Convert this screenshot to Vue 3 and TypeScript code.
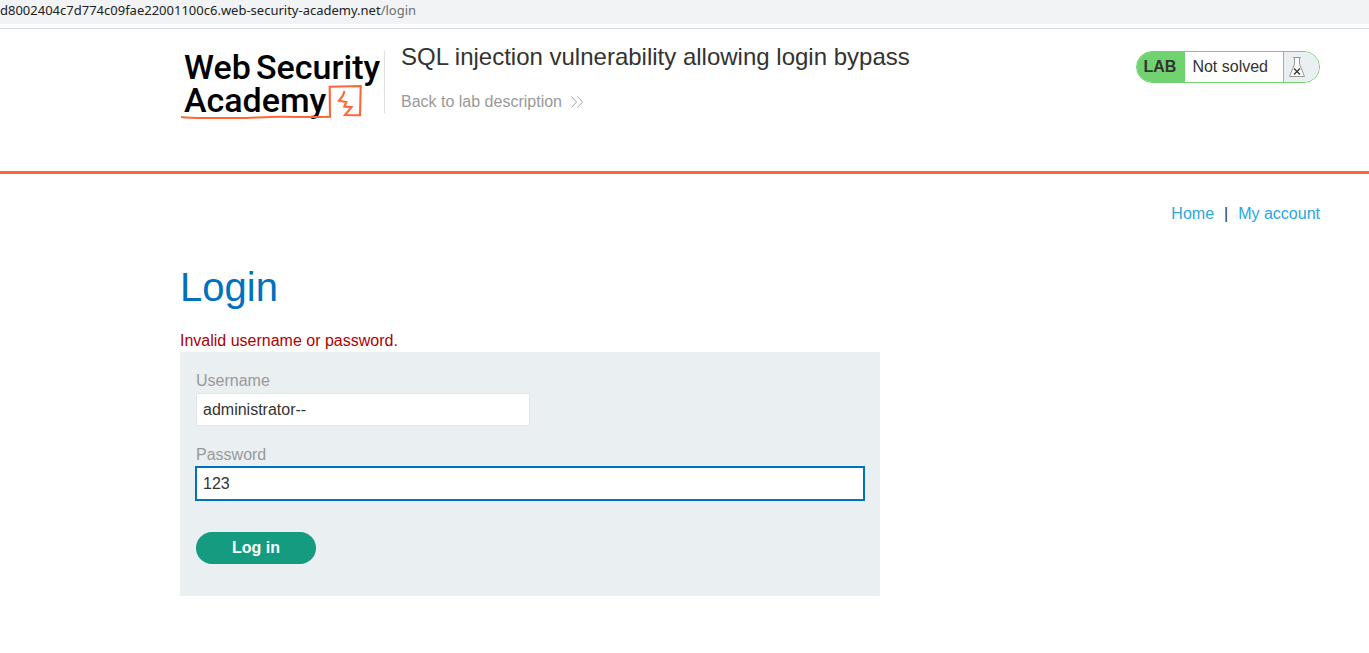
<script setup lang="ts">
import { ref } from 'vue'

const username = ref('administrator--')
const password = ref('123')
</script>

<template>
  <div class="page">
    <div class="address-bar">
      <div class="address">d8002404c7d774c09fae22001100c6.web-security-academy.net<span class="path">/login</span></div>
    </div>

    <header class="lab-header">
      <a class="logo" href="#" aria-label="Web Security Academy">
        <svg width="204" height="76" viewBox="0 0 204 76">
          <g class="wordmark">
            <text x="4" y="32">Web</text>
            <text x="76" y="32">Security</text>
            <text x="4" y="65">Academy</text>
          </g>
          <g fill="none" stroke="#ff6633">
            <path d="M150 70L149.700 39.700L180.700 39L180 68.200L165 68L171.500 60.200L164.300 59.500L166.300 55L159 53.700L163 48.500L164.500 44" stroke-width="2.100" />
            <path d="M1 70C18 72 34 70.500 50 71S74 70.500 90 70S132 70.500 151 69.800" stroke-width="2" />
          </g>
        </svg>
      </a>
      <div class="title-block">
        <h2>SQL injection vulnerability allowing login bypass</h2>
        <a class="back" href="#">
          Back to lab description
          <svg width="14" height="12" viewBox="0 0 14 12" fill="none" stroke="#a3a3a3" aria-hidden="true">
            <path d="M1.500 0.500L6.500 6L1.500 11.500M7.500 0.500L12.500 6L7.500 11.500" />
          </svg>
        </a>
      </div>
      <div class="status">
        <span class="lab">LAB</span>
        <span class="state">Not solved</span>
        <span class="flask">
          <svg width="18" height="22" viewBox="0 0 18 22" fill="none" aria-hidden="true">
            <path d="M6.500 1.500V8L1.500 20.500H16.500L11.500 8V1.500Z" fill="#fff" stroke="#999" />
            <path d="M5 1.500H13" stroke="#999" />
            <path d="M6 12.500L12 18.500M12 12.500L6 18.500" stroke="#333" stroke-width="1.300" />
          </svg>
        </span>
      </div>
    </header>

    <main>
      <nav>
        <a href="#">Home</a>
        <span>|</span>
        <a href="#">My account</a>
      </nav>
      <h1>Login</h1>
      <p class="warning">Invalid username or password.</p>
      <form @submit.prevent>
        <label for="username">Username</label>
        <input id="username" v-model="username" class="short" type="text" />
        <label for="password">Password</label>
        <input id="password" v-model="password" class="active" type="text" />
        <button type="submit">Log in</button>
      </form>
    </main>
  </div>
</template>

<style>
body {
  margin: 0;
  background: #fff;
}
</style>

<style scoped>
.page {
  color: #333332;
  font: 16px/20px "Liberation Sans", Arial, sans-serif;
}
a {
  text-decoration: none;
}
.address-bar {
  padding-bottom: 4px;
  border-bottom: 1px solid #d9dadc;
}
.address {
  height: 24px;
  background: #f1f3f4;
  color: #202124;
  font: 13px/21px "Noto Sans", "Open Sans", sans-serif;
  white-space: nowrap;
}
.path {
  color: #6b6e72;
}
.lab-header {
  display: flex;
  align-items: flex-start;
  box-sizing: border-box;
  min-height: 145px;
  padding: 18px 49px 0 180px;
  border-bottom: 3px solid #ff6633;
}
.logo {
  display: flex;
}
.wordmark {
  fill: #000;
  font: 500 34px Roboto, sans-serif;
}
.title-block {
  flex: 1;
  margin-top: 4px;
  padding-left: 16px;
  min-height: 62px;
  border-left: 1px solid #e0e0e0;
}
.title-block h2 {
  margin: -8px 0 0;
  font-size: 24px;
  font-weight: 400;
  line-height: 28px;
}
.back {
  display: flex;
  align-items: center;
  gap: 8px;
  margin-top: 21px;
  color: #999;
}
.status {
  display: flex;
  box-sizing: border-box;
  height: 32px;
  margin-top: 4px;
  overflow: hidden;
  border: 1px solid #71d36f;
  border-radius: 16px;
  line-height: 30px;
}
.lab {
  padding: 0 9px 0 7px;
  background: #71d36f;
  font-weight: 700;
}
.state {
  padding: 0 15px 0 7px;
}
.flask {
  display: flex;
  align-items: center;
  padding: 0 13px 0 4px;
  border-left: 1px solid #71d36f;
  background: #eaeff2;
}
main {
  padding: 30px 49px 57px 180px;
}
nav {
  display: flex;
  justify-content: flex-end;
  gap: 10px;
}
nav a {
  color: #29a7df;
}
h1 {
  margin: 40px 0 20px;
  color: #0071bc;
  font-size: 40px;
  font-weight: 400;
  line-height: 46px;
}
.warning {
  margin: 0;
  color: #b00000;
  line-height: 22px;
}
form {
  display: flex;
  flex-direction: column;
  align-items: flex-start;
  box-sizing: border-box;
  max-width: 700px;
  padding: 16px 16px 32px;
  background: #eaeff2;
}
label {
  padding-top: 1px;
  color: #999;
  line-height: 24px;
}
input {
  box-sizing: border-box;
  width: 100%;
  height: 33px;
  margin-bottom: 16px;
  padding: 0 6px;
  border: 1px solid #e3e5e8;
  border-radius: 0;
  background: #fff;
  color: #333332;
  font: inherit;
}
.short {
  width: 50%;
}
.active {
  border-color: #0071bc;
  outline: 1px solid #0071bc;
}
button {
  width: 120px;
  height: 32px;
  margin-top: 16px;
  padding: 0;
  border: 0;
  border-radius: 16px;
  background: #159b80;
  color: #fff;
  font: inherit;
  font-weight: 700;
}
</style>
